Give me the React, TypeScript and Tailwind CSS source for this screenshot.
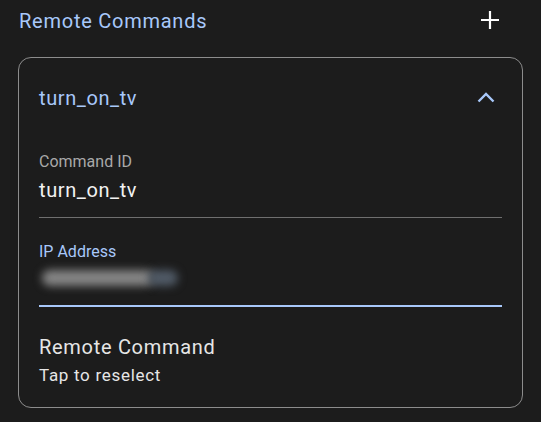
import React from 'react';

function PlusIcon() {
  return (
    <svg width="20" height="20" viewBox="0 0 20 20" fill="none">
      <path d="M10 1v18M1 10h18" stroke="#ffffff" strokeWidth="2.2" />
    </svg>
  );
}

function ChevronUp() {
  return (
    <svg width="18" height="11" viewBox="0 0 18 11" fill="none">
      <path d="M1.5 9.5L9 2l7.5 7.5" stroke="#a8c8fa" strokeWidth="2.4" />
    </svg>
  );
}

export default function App() {
  return (
    <div className="w-[541px] h-[422px] bg-[#1c1c1c] overflow-hidden" style={{ fontFamily: 'Roboto, "Noto Sans", sans-serif' }}>
      <div className="h-[40px] flex items-center justify-between pl-[19px] pr-[41px]">
        <span className="pt-[2px] text-[20px] leading-[24px] tracking-[0.75px] text-[#a8c8fa]">Remote Commands</span>
        <PlusIcon />
      </div>

      <div className="mx-[18px] mt-[17px] h-[351px] border border-[#8c8c8c] rounded-[13px] px-[20px]">
        <div className="h-[80px] flex items-center justify-between">
          <span className="text-[20px] leading-[24px] tracking-[0.6px] text-[#a8c8fa]">turn_on_tv</span>
          <div className="pr-[7px] pb-[2px]">
            <ChevronUp />
          </div>
        </div>

        <div className="pt-[14px] border-b border-[#6f6f6f] pb-[15px]">
          <div className="text-[16px] leading-[20px] text-[#a9a9a9]">Command ID</div>
          <div className="mt-[6px] text-[20px] leading-[24px] tracking-[0.6px] text-[#f2f2f2]">turn_on_tv</div>
        </div>

        <div className="pt-[24px] border-b-2 border-[#a8c8fa] pb-[15px]">
          <div className="text-[16px] leading-[20px] text-[#a8c8fa]">IP Address</div>
          <div className="mt-[4px] h-[24px] flex items-center">
            <div className="ml-[3px] w-[112px] h-[16px] rounded-full bg-[#858585] blur-[4px]" />
            <div className="-ml-[6px] w-[30px] h-[16px] rounded-full bg-[#505a66] blur-[4px]" />
          </div>
        </div>

        <div className="pt-[28px]">
          <div className="text-[20px] leading-[24px] tracking-[0.7px] text-[#e6e6e6]">Remote Command</div>
          <div className="mt-[5px] text-[17px] leading-[22px] tracking-[0.7px] text-[#e6e6e6]">Tap to reselect</div>
        </div>
      </div>
    </div>
  );
}
